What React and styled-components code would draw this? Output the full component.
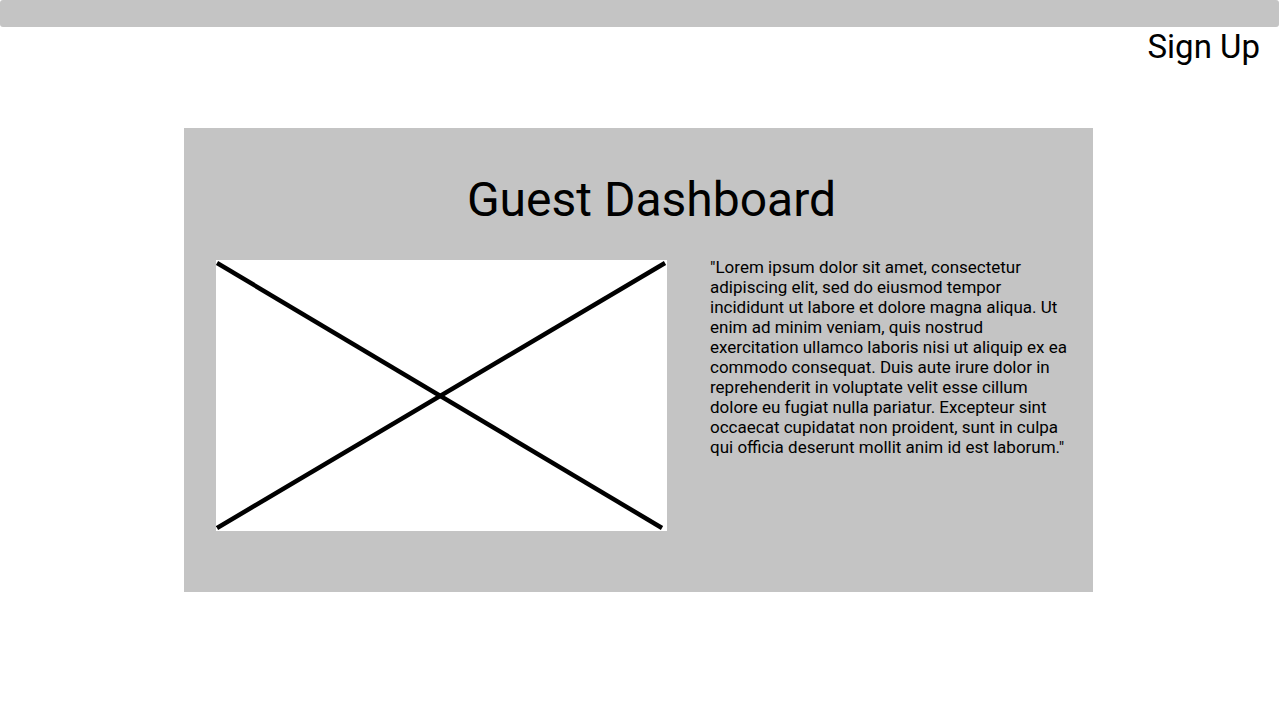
import styled, { createGlobalStyle } from "styled-components";

const GlobalStyle = createGlobalStyle`
  body {
    margin: 0;
    background: #ffffff;
    font-family: Roboto, "Liberation Sans", sans-serif;
    color: #000;
  }
`;

const Page = styled.div`
  width: 1280px;
  height: 720px;
  display: flex;
  flex-direction: column;
`;

const TopBar = styled.header`
  height: 27px;
  margin-right: 1px;
  background: #c4c4c4;
  border-radius: 3px;
`;

const NavRow = styled.nav`
  display: flex;
  justify-content: flex-end;
  padding-right: 20px;
`;

const NavLink = styled.a`
  font-size: 33px;
  line-height: 40px;
  color: #000;
  text-decoration: none;
`;

const Card = styled.section`
  margin: 61px 0 0 184px;
  width: 909px;
  height: 464px;
  box-sizing: border-box;
  background: #c4c4c4;
  padding: 40px 22px 0 32px;
`;

const Title = styled.h1`
  margin: 0;
  padding-left: 16px;
  text-align: center;
  font-size: 48px;
  font-weight: 400;
  line-height: 64px;
`;

const Body = styled.div`
  display: grid;
  grid-template-columns: 451px 1fr;
  column-gap: 43px;
  margin-top: 28px;
`;

const Placeholder = styled.svg`
  display: block;
  width: 451px;
  height: 271px;
  background: #fff;
`;

const Text = styled.p`
  margin: -3px 0 0;
  font-size: 17px;
  line-height: 20px;
`;

export default function App() {
  return (
    <Page>
      <GlobalStyle />
      <TopBar />
      <NavRow>
        <NavLink href="#">Sign Up</NavLink>
      </NavRow>
      <Card>
        <Title>Guest Dashboard</Title>
        <Body>
          <Placeholder viewBox="0 0 451 271">
            <line x1="1" y1="3" x2="446" y2="268" stroke="#000" strokeWidth="4.5" />
            <line x1="1" y1="268" x2="449" y2="3" stroke="#000" strokeWidth="4.5" />
          </Placeholder>
          <Text>
            "Lorem ipsum dolor sit amet, consectetur adipiscing elit, sed do eiusmod tempor
            incididunt ut labore et dolore magna aliqua. Ut enim ad minim veniam, quis nostrud
            exercitation ullamco laboris nisi ut aliquip ex ea commodo consequat. Duis aute irure
            dolor in reprehenderit in voluptate velit esse cillum dolore eu fugiat nulla pariatur.
            Excepteur sint occaecat cupidatat non proident, sunt in culpa qui officia deserunt
            mollit anim id est laborum."
          </Text>
        </Body>
      </Card>
    </Page>
  );
}
